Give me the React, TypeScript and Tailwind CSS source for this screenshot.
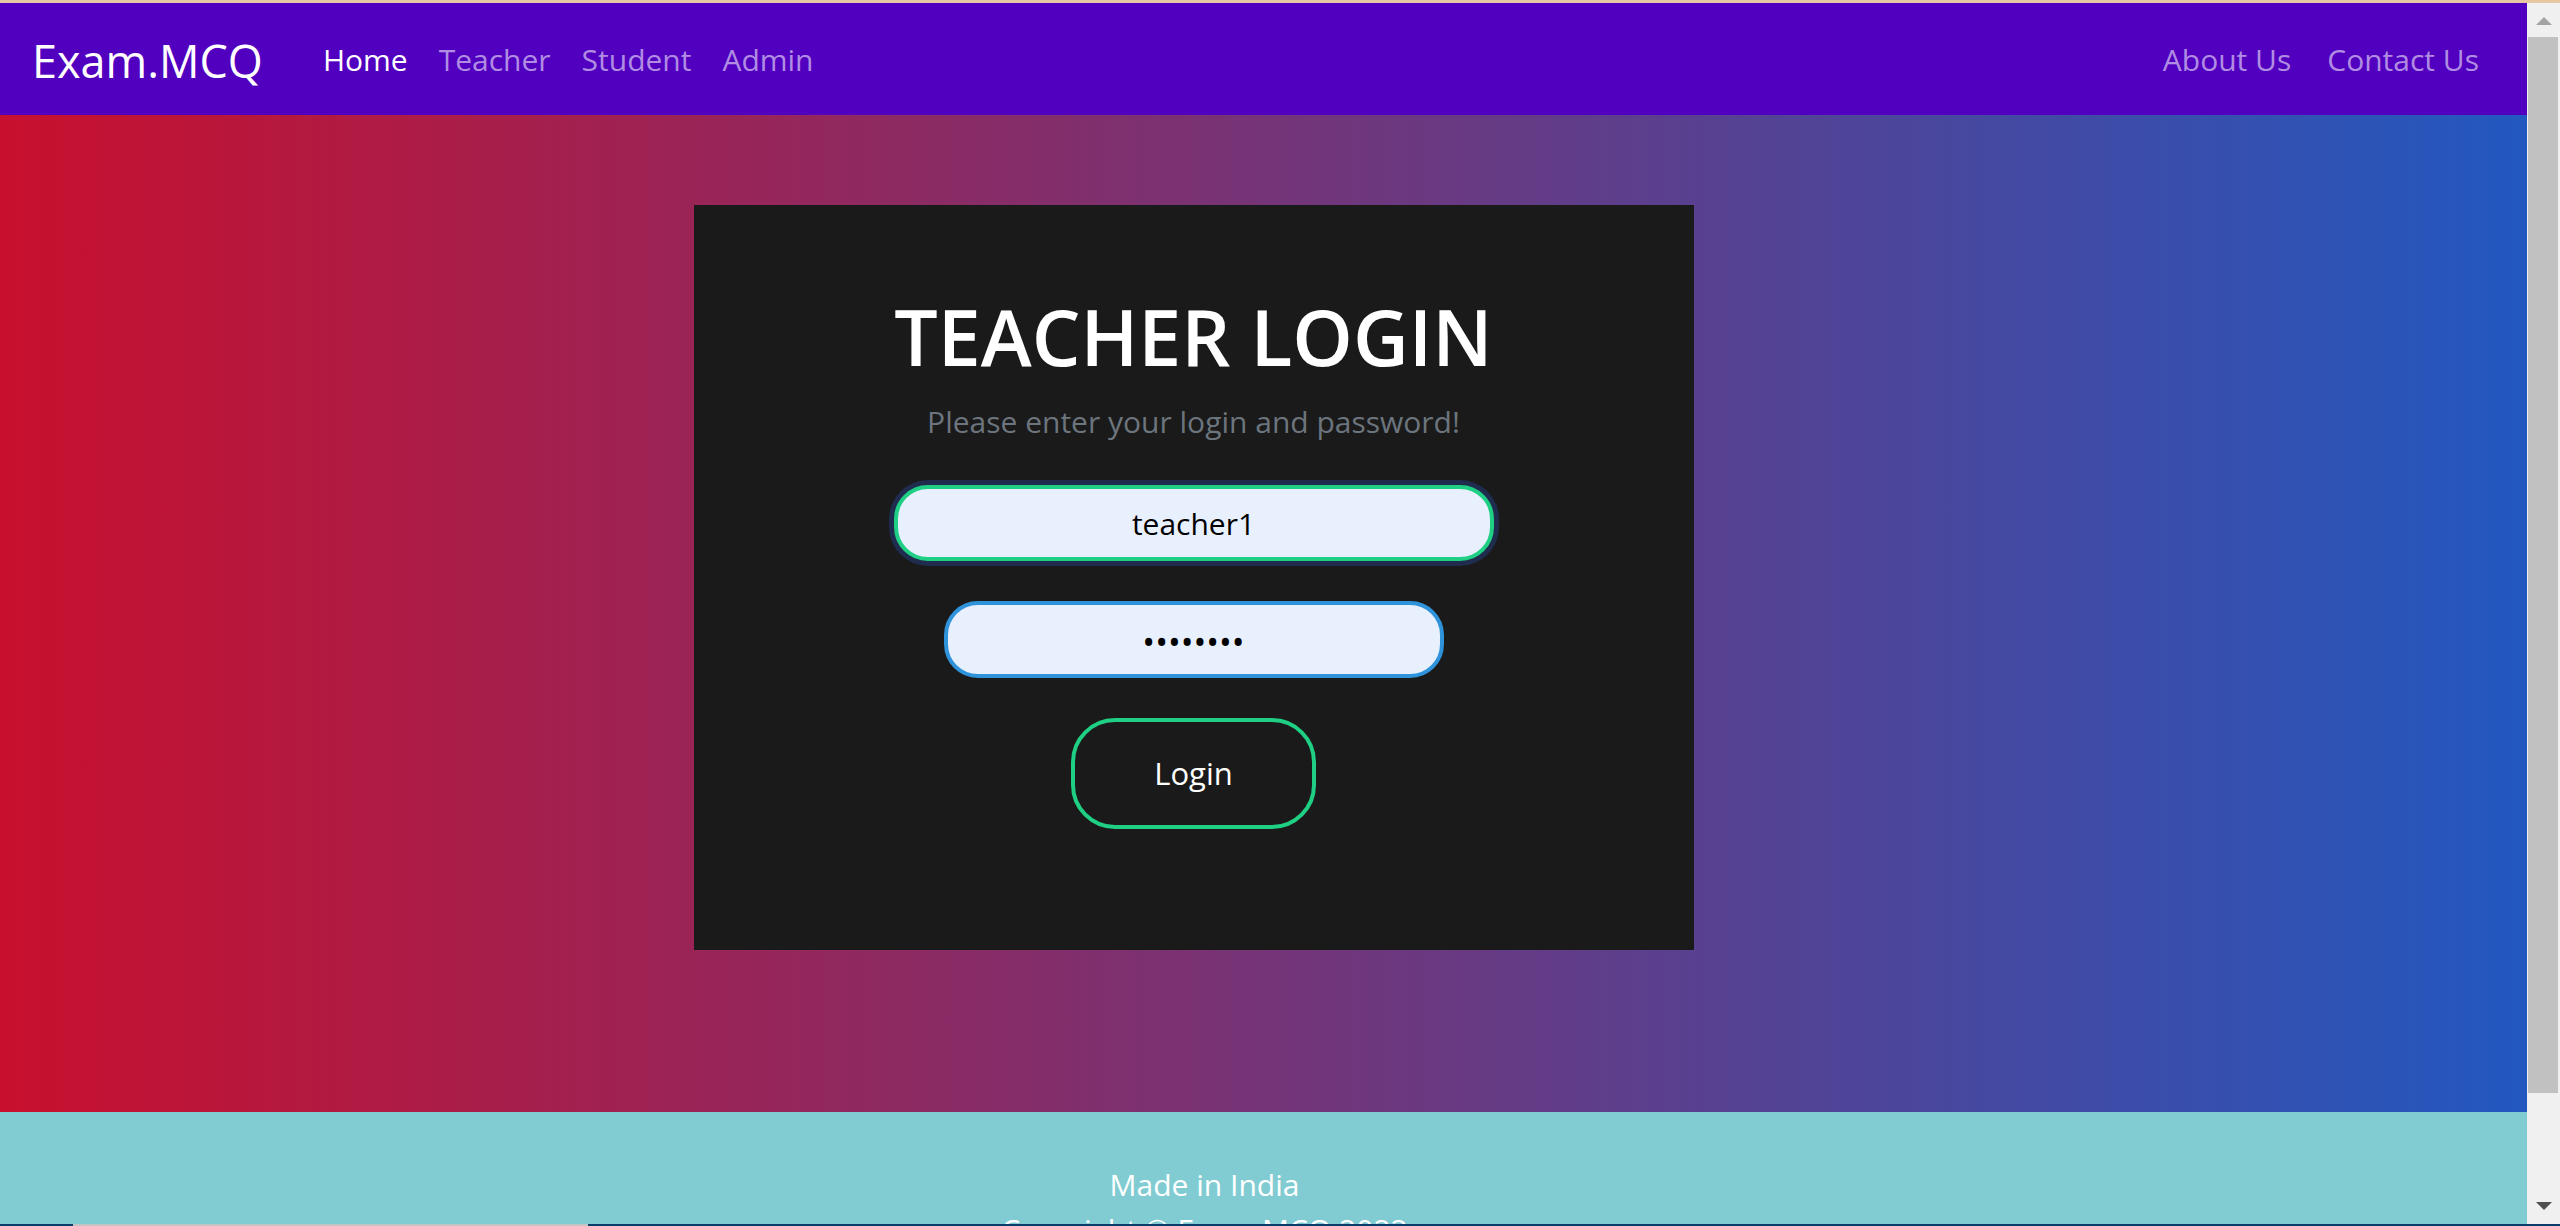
import React from "react";

const font = { fontFamily: '"Open Sans", "Noto Sans", sans-serif' };

function Scrollbar() {
  return (
    <div className="w-[33px] shrink-0 bg-[#f0f0f0] flex flex-col items-center">
      <div className="h-[34px] w-full flex items-start justify-center pt-[14px]">
        <svg width="16" height="8" viewBox="0 0 16 8">
          <polygon points="8,0 16,8 0,8" fill="#a3a3a3" />
        </svg>
      </div>
      <div className="w-[30px] h-[1056px] bg-[#c1c1c1] mr-[1px]" />
      <div className="flex-1 w-full flex items-start justify-center pt-[109px]">
        <svg width="16" height="8" viewBox="0 0 16 8">
          <polygon points="0,0 16,0 8,8" fill="#505050" />
        </svg>
      </div>
    </div>
  );
}

export default function App() {
  return (
    <div className="w-full h-[1226px] overflow-hidden flex flex-col bg-white" style={font}>
      <div className="h-[3px] w-full bg-[#e6c9a3] shrink-0" />
      <div className="flex flex-1 min-h-0">
        <div className="flex-1 flex flex-col min-w-0">
          {/* Navbar */}
          <nav className="h-[112px] shrink-0 bg-[#5100bf] flex items-center pl-[32px] pr-[48px]">
            <a className="text-white text-[45px] leading-none mt-[3px] mr-[60px] whitespace-nowrap">Exam.MCQ</a>
            <div className="flex items-center gap-[31px] text-[30px] leading-none mt-[2px]">
              <a className="text-white">Home</a>
              <a className="text-[#b08ce3]">Teacher</a>
              <a className="text-[#b08ce3]">Student</a>
              <a className="text-[#b08ce3]">Admin</a>
            </div>
            <div className="ml-auto flex items-center gap-[36px] text-[30px] leading-none mt-[2px]">
              <a className="text-[#b08ce3]">About Us</a>
              <a className="text-[#b08ce3]">Contact Us</a>
            </div>
          </nav>

          {/* Main */}
          <main className="h-[997px] shrink-0 bg-[linear-gradient(to_right,#c8102e,#2258c0)] flex justify-center pr-[140px] pt-[90px]">
            <div className="w-[1000px] h-[745px] bg-[#1a1a1a] flex flex-col items-center pt-[93px]">
              <h2 className="text-white text-[77px] font-semibold leading-none h-[77px] whitespace-nowrap">
                TEACHER LOGIN
              </h2>
              <p className="mt-[24px] text-[#6c757d] text-[30px] leading-[45px] whitespace-nowrap">
                Please enter your login and password!
              </p>
              <input
                readOnly
                type="text"
                value="teacher1"
                className="mt-[41px] w-[600px] h-[76px] rounded-[34px] border-[4px] border-[#1ecf84] bg-[#e8f0fe] text-black text-[30px] text-center outline-none shadow-[0_0_0_5px_#1f2c4e]"
                style={font}
              />
              <input
                readOnly
                type="password"
                value="teacher1"
                className="mt-[40px] w-[500px] h-[77px] rounded-[34px] border-[4px] border-[#2f93dc] bg-[#e8f0fe] text-black text-[34px] text-center outline-none pt-[4px]"
                style={font}
              />
              <button
                className="mt-[40px] w-[245px] h-[111px] rounded-[44px] border-[4px] border-[#1ecf84] bg-transparent text-white text-[31px] leading-none"
                style={font}
              >
                Login
              </button>
            </div>
          </main>

          {/* Footer */}
          <footer className="h-[112px] shrink-0 bg-[#80ccd2] flex flex-col items-center pt-[50px] pr-[118px] text-white text-[30px] leading-[45px]">
            <p className="whitespace-nowrap">Made in India</p>
            <p className="whitespace-nowrap">Copyright © Exam.MCQ 2022</p>
          </footer>
        </div>
        <Scrollbar />
      </div>
      <div className="h-[2px] w-full shrink-0 bg-[#0b3d6b] flex">
        <div className="ml-[73px] w-[515px] h-full bg-[#c4c4c4]" />
      </div>
    </div>
  );
}
